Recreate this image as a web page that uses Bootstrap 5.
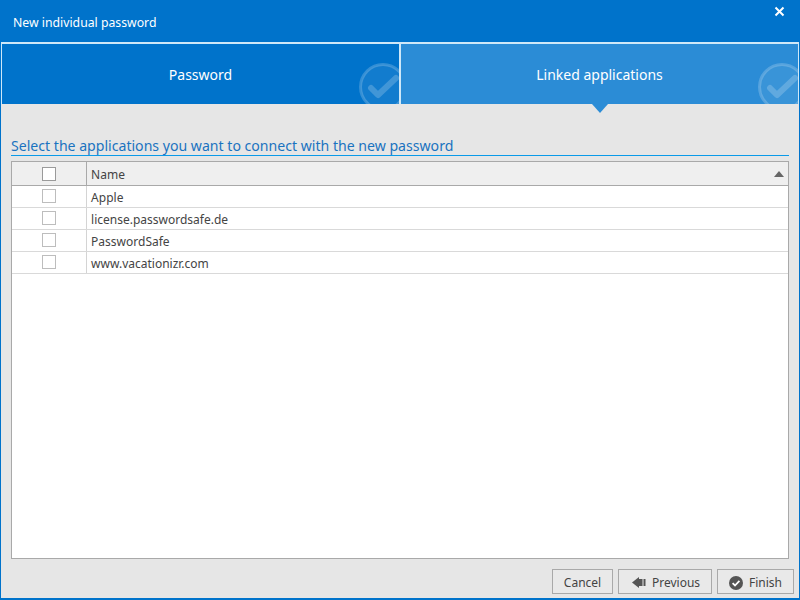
<!DOCTYPE html>
<html lang="en">
<head>
<meta charset="utf-8">
<title>New individual password</title>
<link href="https://cdn.jsdelivr.net/npm/bootstrap@5.3.0/dist/css/bootstrap.min.css" rel="stylesheet">
<style>
html,body{height:100%;margin:0;}
body{font-family:"Noto Sans","Open Sans","Liberation Sans",sans-serif;font-size:12px;color:#444;background:#e6e6e6;overflow:hidden;}
.win{width:800px;height:600px;border:solid #0073cb;border-width:0 1px 2px 1px;background:#e6e6e6;}
.titlebar{height:42px;margin:0 -1px;background:#0073cb;color:#fff;padding:14px 0 0 13px;line-height:18px;font-size:12.25px;}
.closer{top:6px;right:15px;line-height:0;}
.wizard{height:62px;border:solid #cfe8f8;border-width:2px 1px 0 1px;}
.step{flex:1 1 0;min-width:0;color:#fff;font-size:14px;overflow:hidden;padding-top:1px;}
.step-done{background:#0073cb;border-right:2px solid #cfe8f8;}
.step-now{background:#2b8cd6;}
.tickmark{right:-9px;bottom:-8px;}
.pointer{left:75%;top:0;margin-left:-8px;width:0;height:0;border:solid transparent;border-width:9px 8px 0 8px;border-top-color:#2b8cd6;}
.pane{padding:0 10px 0 10px;}
.heading{font-size:14.1px;line-height:22px;color:#1a73c0;margin:31px 0 0;height:20px;}
.heading-rule{height:1px;background:#0a9ae8;margin-bottom:5px;}
.gridbox{height:398px;background:#fff;border:1px solid #a9a9a9;}
.gridbox table{font-size:12px;color:#444;}
.gridbox th,.gridbox td{padding:0;font-weight:400;vertical-align:middle;background:transparent;color:#444;}
.gridbox thead tr{height:23px;background:#efefef;}
.gridbox thead th{border-bottom:1px solid #a9a9a9;}
.gridbox tbody tr{height:22px;}
.gridbox tbody td{border-bottom:1px solid #d9d9d9;}
.pick{width:74px;border-right:1px solid #d4d4d4;text-align:center;}
.gridbox thead .pick{border-right-color:#a9a9a9;}
.namecell{padding:3px 0 0 5px !important;text-indent:-.4px;}
.box{display:block;width:14px;height:14px;background:#fff;border:1px solid #bdbdbd;margin:0 auto 1px;}
thead .box{border-color:#9a9a9a;margin:1px auto 0;}
.sorter{right:4px;top:9px;width:0;height:0;border:solid transparent;border-width:0 5px 6px 5px;border-bottom-color:#666;}
.actions{gap:5px;margin:10px -5px 0 0;}
.actbtn{height:25px;padding:2px 0 0;display:flex;align-items:center;justify-content:center;gap:6px;border:1px solid #a9a9a9;border-radius:0;background:#e9e9e9;color:#444;font-size:12px;line-height:1;}
.w-cancel{width:61px;}.w-prev{width:94px;padding-left:2px;}.w-finish{width:77px;}
</style>
</head>
<body>
<div class="win d-flex flex-column">
  <div class="titlebar position-relative">New individual password
    <span class="closer position-absolute"><svg width="11" height="11" viewBox="0 0 11 11"><path d="M1.5 1.5l8 8M9.5 1.5l-8 8" stroke="#fff" stroke-width="2" fill="none"/></svg></span>
  </div>
  <div class="wizard d-flex">
    <div class="step step-done position-relative d-flex align-items-center justify-content-center">Password
      <svg class="tickmark position-absolute" width="50" height="50" viewBox="0 0 50 50"><circle cx="25" cy="25" r="22.5" fill="#ffffff" fill-opacity=".07" stroke="#ffffff" stroke-opacity=".2" stroke-width="3"/><path d="M13 26l7 7 18-17" fill="none" stroke="#ffffff" stroke-opacity=".2" stroke-width="6" stroke-linecap="round" stroke-linejoin="round"/></svg>
    </div>
    <div class="step step-now position-relative d-flex align-items-center justify-content-center">Linked applications
      <svg class="tickmark position-absolute" width="50" height="50" viewBox="0 0 50 50"><circle cx="25" cy="25" r="22.5" fill="#ffffff" fill-opacity=".07" stroke="#ffffff" stroke-opacity=".2" stroke-width="3"/><path d="M13 26l7 7 18-17" fill="none" stroke="#ffffff" stroke-opacity=".2" stroke-width="6" stroke-linecap="round" stroke-linejoin="round"/></svg>
    </div>
  </div>
  <div class="pane flex-grow-1 position-relative">
    <span class="pointer position-absolute"></span>
    <div class="heading">Select the applications you want to connect with the new password</div>
    <div class="heading-rule"></div>
    <div class="gridbox position-relative">
      <table class="table table-borderless m-0">
        <thead>
          <tr><th class="pick"><span class="box"></span></th><th class="namecell position-relative">Name<span class="sorter position-absolute"></span></th></tr>
        </thead>
        <tbody>
          <tr><td class="pick"><span class="box"></span></td><td class="namecell">Apple</td></tr>
          <tr><td class="pick"><span class="box"></span></td><td class="namecell">license.passwordsafe.de</td></tr>
          <tr><td class="pick"><span class="box"></span></td><td class="namecell">PasswordSafe</td></tr>
          <tr><td class="pick"><span class="box"></span></td><td class="namecell">www.vacationizr.com</td></tr>
        </tbody>
      </table>
    </div>
    <div class="actions d-flex justify-content-end">
      <button type="button" class="btn actbtn w-cancel">Cancel</button>
      <button type="button" class="btn actbtn w-prev"><svg width="14" height="11" viewBox="0 0 14 11"><path d="M0 5.5L7 0v11z" fill="#555"/><rect x="7" y="2" width="3.5" height="7" fill="#555"/><rect x="11.5" y="2" width="2" height="7" fill="#555"/></svg>Previous</button>
      <button type="button" class="btn actbtn w-finish"><svg width="14" height="14" viewBox="0 0 14 14"><circle cx="7" cy="7" r="7" fill="#555"/><path d="M3.6 7.2l2.4 2.3 4.4-4.6" fill="none" stroke="#fff" stroke-width="1.8"/></svg>Finish</button>
    </div>
  </div>
</div>
<script src="https://cdn.jsdelivr.net/npm/bootstrap@5.3.0/dist/js/bootstrap.bundle.min.js"></script>
</body>
</html>
